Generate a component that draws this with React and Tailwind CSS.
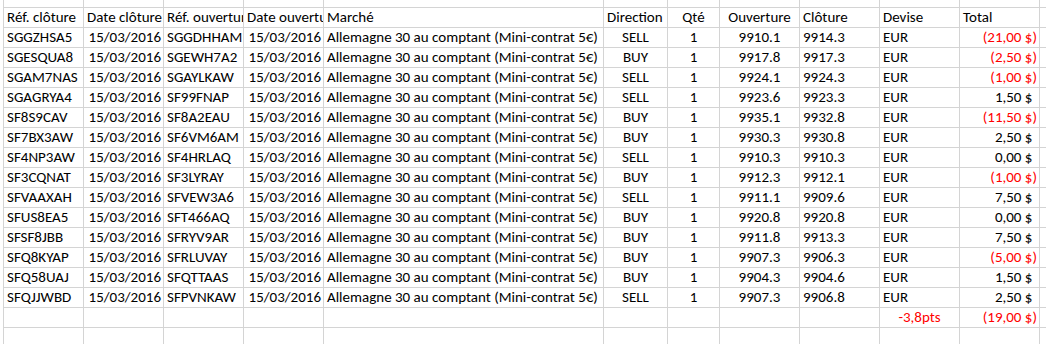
import React from 'react';

const rows = [
  ['SGGZHSA5', 'SGGDHHAM', 'SELL', '9910.1', '9914.3', '21,00', true],
  ['SGESQUA8', 'SGEWH7A2', 'BUY', '9917.8', '9917.3', '2,50', true],
  ['SGAM7NAS', 'SGAYLKAW', 'SELL', '9924.1', '9924.3', '1,00', true],
  ['SGAGRYA4', 'SF99FNAP', 'SELL', '9923.6', '9923.3', '1,50', false],
  ['SF8S9CAV', 'SF8A2EAU', 'BUY', '9935.1', '9932.8', '11,50', true],
  ['SF7BX3AW', 'SF6VM6AM', 'BUY', '9930.3', '9930.8', '2,50', false],
  ['SF4NP3AW', 'SF4HRLAQ', 'SELL', '9910.3', '9910.3', '0,00', false],
  ['SF3CQNAT', 'SF3LYRAY', 'BUY', '9912.3', '9912.1', '1,00', true],
  ['SFVAAXAH', 'SFVEW3A6', 'SELL', '9911.1', '9909.6', '7,50', false],
  ['SFUS8EA5', 'SFT466AQ', 'BUY', '9920.8', '9920.8', '0,00', false],
  ['SFSF8JBB', 'SFRYV9AR', 'BUY', '9911.8', '9913.3', '7,50', false],
  ['SFQ8KYAP', 'SFRLUVAY', 'BUY', '9907.3', '9906.3', '5,00', true],
  ['SFQ58UAJ', 'SFQTTAAS', 'BUY', '9904.3', '9904.6', '1,50', false],
  ['SFQJJWBD', 'SFPVNKAW', 'SELL', '9907.3', '9906.8', '2,50', false],
];

// column widths, left border included
const W = ['w-[80px]', 'w-[80px]', 'w-[80px]', 'w-[80px]', 'w-[280px]', 'w-[64px]', 'w-[52px]', 'w-[80px]', 'w-[80px]', 'w-[80px]', 'w-[80px]'];

const Cell = ({ w, align = 'left', red, children }) => {
  const a = align === 'right' ? 'justify-end pr-[2px]' : align === 'center' ? 'justify-center' : 'justify-start pl-[3px]';
  return (
    <div className={`${w} shrink-0 h-full border-l border-[#d4d4d4] flex items-end pb-[1px] overflow-hidden whitespace-nowrap ${a} ${red ? 'text-[#ff0000]' : 'text-black'}`}>
      {children}
    </div>
  );
};

const Row = ({ cells, top = true, h = 'h-[20px]' }) => (
  <div className={`flex ${h} ${top ? 'border-t border-[#d4d4d4]' : ''}`}>
    {W.map((w, i) => {
      const c = cells ? cells[i] : null;
      return (
        <Cell key={i} w={w} align={c?.align} red={c?.red}>
          {c?.text}
        </Cell>
      );
    })}
    <div className="flex-1 h-full border-l border-[#d4d4d4]" />
  </div>
);

const money = (v, neg) =>
  neg ? <span>({v} $)</span> : <span>{v} $<span className="invisible">)</span></span>;

export default function App() {
  const header = [
    { text: 'Réf. clôture' },
    { text: 'Date clôture' },
    { text: 'Réf. ouverture' },
    { text: 'Date ouverture' },
    { text: 'Marché' },
    { text: 'Direction' },
    { text: 'Qté', align: 'center' },
    { text: 'Ouverture', align: 'center' },
    { text: 'Clôture' },
    { text: 'Devise' },
    { text: 'Total' },
  ];

  return (
    <div className="w-[1046px] h-[344px] overflow-hidden bg-white pl-[3px] text-[15px] leading-[18px]" style={{ fontFamily: 'Carlito, Calibri, Lato, sans-serif' }}>
      <Row top={false} h="h-[7px]" />
      <Row cells={header} />
      {rows.map((r) => (
        <Row
          key={r[0]}
          cells={[
            { text: r[0] },
            { text: '15/03/2016', align: 'right' },
            { text: r[1] },
            { text: '15/03/2016', align: 'right' },
            { text: 'Allemagne 30 au comptant (Mini-contrat 5€)' },
            { text: r[2], align: 'center' },
            { text: '1', align: 'center' },
            { text: r[3], align: 'center' },
            { text: r[4] },
            { text: 'EUR' },
            { text: money(r[5], r[6]), align: 'right', red: r[6] },
          ]}
        />
      ))}
      <Row
        cells={[
          null, null, null, null, null, null, null, null, null,
          { text: '-3,8pts', align: 'center', red: true },
          { text: money('19,00', true), align: 'right', red: true },
        ]}
      />
      <Row />
    </div>
  );
}
